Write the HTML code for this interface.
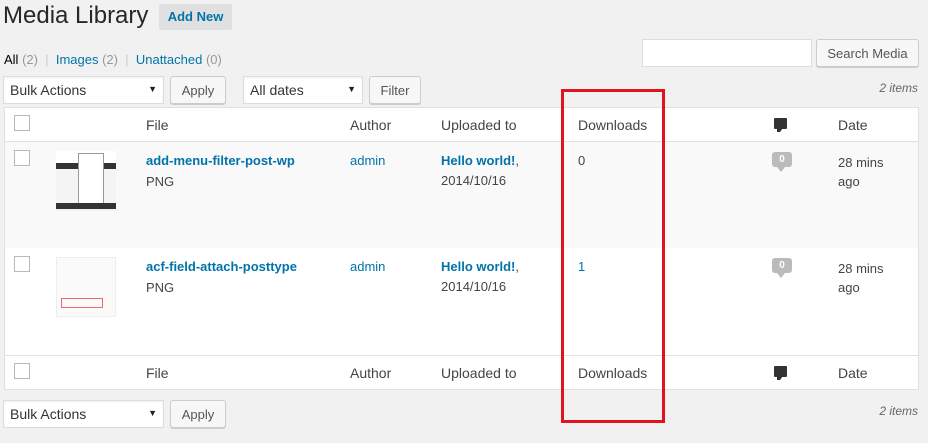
<html><head><style>
body{margin:0;width:928px;height:443px;background:#f1f1f1;font-family:"Liberation Sans",sans-serif;font-size:14px;color:#444;position:relative;overflow:hidden}
.a{position:absolute;white-space:nowrap}
a,.l{color:#0073aa;text-decoration:none}
.btn{position:absolute;background:#f7f7f7;border:1px solid #ccc;border-radius:3px;box-shadow:0 1px 0 #ccc;font-size:13px;color:#555;text-align:center;box-sizing:border-box}
.sel{position:absolute;background:#fff;border:1px solid #ddd;box-shadow:inset 0 1px 2px rgba(0,0,0,.07);box-sizing:border-box;font-size:14px;color:#333;padding:5px 6px}
.sel:after{content:"▼";position:absolute;right:6px;top:7px;font-size:9px;color:#222}
.cb{position:absolute;width:16px;height:16px;border:1px solid #b4b9be;background:#fff;box-sizing:border-box}
.row{position:absolute;left:4px;width:915px}
.bub{position:absolute;width:20px;height:15px;background:#bbb;border-radius:3px;color:#fff;font-size:10px;font-weight:bold;text-align:center;line-height:15px}
.bub:after{content:"";position:absolute;left:5px;top:15px;border-left:4px solid transparent;border-right:4px solid transparent;border-top:5px solid #bbb}
.hic{position:absolute;width:13px;height:11px;background:#333;border-radius:1px}
.hic:after{content:"";position:absolute;left:3px;top:10px;border-left:3px solid #333;border-right:3px solid transparent;border-top:4px solid #333}
</style></head><body>
<div class="a" style="left:3px;top:2px;font-size:24px;color:#23282d">Media Library</div>
<div class="a" style="left:159px;top:4px;width:73px;height:26px;background:#e0e0e0;border-radius:2px;color:#0073aa;font-size:13px;font-weight:bold;text-align:center;line-height:26px">Add New</div>
<div class="a" style="left:4px;top:52px;font-size:13px;color:#666"><span style="color:#000">All</span> <span style="color:#999">(2)</span> <span style="color:#ccc">&nbsp;|&nbsp;</span> <span class="l">Images</span> <span style="color:#999">(2)</span> <span style="color:#ccc">&nbsp;|&nbsp;</span> <span class="l">Unattached</span> <span style="color:#999">(0)</span></div>
<div class="a" style="left:642px;top:39px;width:170px;height:28px;background:#fff;border:1px solid #ddd;box-sizing:border-box"></div>
<div class="btn" style="left:816px;top:39px;width:103px;height:28px;line-height:27px">Search Media</div>
<div class="sel" style="left:3px;top:76px;width:161px;height:28px">Bulk Actions</div>
<div class="btn" style="left:170px;top:76px;width:56px;height:28px;line-height:28px">Apply</div>
<div class="sel" style="left:243px;top:76px;width:120px;height:28px">All dates</div>
<div class="btn" style="left:369px;top:76px;width:52px;height:28px;line-height:28px">Filter</div>
<div class="a" style="right:10px;top:81px;font-size:12px;font-style:italic;color:#666">2 items</div>

<div class="row" style="top:107px;height:35px;background:#fff;border:1px solid #e1e1e1;box-sizing:border-box"></div>
<div class="row" style="top:142px;height:106px;background:#f9f9f9;border-left:1px solid #e1e1e1;border-right:1px solid #e1e1e1;box-sizing:border-box"></div>
<div class="row" style="top:248px;height:107px;background:#fff;border-left:1px solid #e1e1e1;border-right:1px solid #e1e1e1;box-sizing:border-box"></div>
<div class="row" style="top:355px;height:35px;background:#fff;border:1px solid #e1e1e1;box-sizing:border-box"></div>

<div class="cb" style="left:14px;top:115px"></div>
<div class="a" style="left:146px;top:117px">File</div>
<div class="a" style="left:350px;top:117px">Author</div>
<div class="a" style="left:441px;top:117px">Uploaded to</div>
<div class="a" style="left:578px;top:117px">Downloads</div>
<div class="hic" style="left:774px;top:118px"></div>
<div class="a" style="left:838px;top:117px">Date</div>

<div class="cb" style="left:14px;top:150px"></div>
<div class="a" style="left:56px;top:151px;width:60px;height:60px;background:#f4f4f4;border-top:14px solid #fff;box-sizing:border-box"><div style="height:6px;background:#333;margin-top:-2px"></div><div style="position:absolute;left:22px;top:-12px;width:24px;height:52px;background:#fff;border:1px solid #999"></div><div style="position:absolute;left:0;top:38px;width:60px;height:6px;background:#333"></div></div>
<div class="a" style="left:146px;top:153px;font-weight:bold;color:#0073aa;font-size:13px">add-menu-filter-post-wp</div>
<div class="a" style="left:146px;top:174px;font-size:13px">PNG</div>
<div class="a" style="left:350px;top:153px;color:#0073aa;font-size:13px">admin</div>
<div class="a" style="left:441px;top:153px;font-size:13px"><b style="color:#0073aa">Hello world!</b>,</div>
<div class="a" style="left:441px;top:173px;font-size:13px">2014/10/16</div>
<div class="a" style="left:578px;top:153px;font-size:13px">0</div>
<div class="bub" style="left:772px;top:152px">0</div>
<div class="a" style="left:838px;top:153px;font-size:13px;line-height:19px">28 mins<br>ago</div>

<div class="cb" style="left:14px;top:256px"></div>
<div class="a" style="left:56px;top:257px;width:60px;height:60px;background:#fafafa;border:1px solid #eee;box-sizing:border-box"><div style="position:absolute;left:4px;top:40px;width:40px;height:8px;border:1px solid #e66"></div></div>
<div class="a" style="left:146px;top:259px;font-weight:bold;color:#0073aa;font-size:13px">acf-field-attach-posttype</div>
<div class="a" style="left:146px;top:280px;font-size:13px">PNG</div>
<div class="a" style="left:350px;top:259px;color:#0073aa;font-size:13px">admin</div>
<div class="a" style="left:441px;top:259px;font-size:13px"><b style="color:#0073aa">Hello world!</b>,</div>
<div class="a" style="left:441px;top:279px;font-size:13px">2014/10/16</div>
<div class="a" style="left:578px;top:259px;font-size:13px;color:#0073aa">1</div>
<div class="bub" style="left:772px;top:258px">0</div>
<div class="a" style="left:838px;top:259px;font-size:13px;line-height:19px">28 mins<br>ago</div>

<div class="cb" style="left:14px;top:363px"></div>
<div class="a" style="left:146px;top:365px">File</div>
<div class="a" style="left:350px;top:365px">Author</div>
<div class="a" style="left:441px;top:365px">Uploaded to</div>
<div class="a" style="left:578px;top:365px">Downloads</div>
<div class="hic" style="left:774px;top:366px"></div>
<div class="a" style="left:838px;top:365px">Date</div>

<div class="sel" style="left:3px;top:400px;width:161px;height:28px">Bulk Actions</div>
<div class="btn" style="left:170px;top:400px;width:56px;height:28px;line-height:28px">Apply</div>
<div class="a" style="right:10px;top:404px;font-size:12px;font-style:italic;color:#666">2 items</div>

<div class="a" style="left:561px;top:89px;width:104px;height:334px;border:3px solid #e0141e;box-sizing:border-box"></div>
</body></html>
